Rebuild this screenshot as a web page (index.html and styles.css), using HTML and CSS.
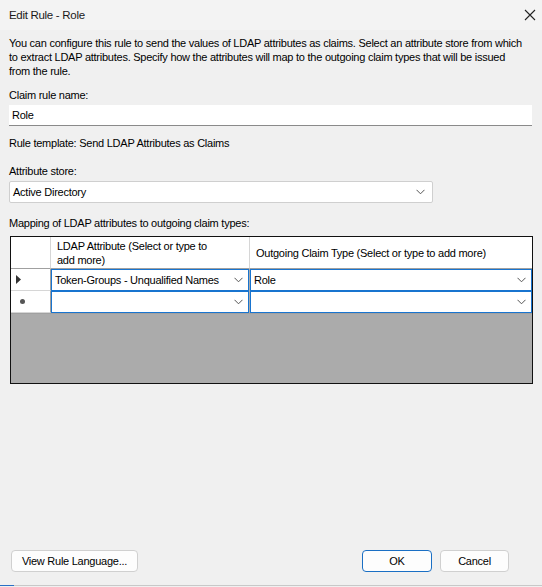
FILE: index.html
```html
<!DOCTYPE html>
<html>
<head>
<meta charset="utf-8">
<link rel="stylesheet" href="styles.css">
</head>
<body>
<div class="window">
  <div class="titlebar">
    <span class="title">Edit Rule - Role</span>
    <svg class="close" width="12" height="12" viewBox="0 0 12 12"><path d="M1 1 L11 11 M11 1 L1 11" stroke="#222" stroke-width="1.1" fill="none"/></svg>
  </div>
  <div class="content">
    <p class="desc">You can configure this rule to send the values of LDAP attributes as claims. Select an attribute store from which<br>to extract LDAP attributes. Specify how the attributes will map to the outgoing claim types that will be issued<br>from the rule.</p>
    <div class="label label-name">Claim rule name:</div>
    <div class="textbox">Role</div>
    <div class="label label-template">Rule template: Send LDAP Attributes as Claims</div>
    <div class="label label-store">Attribute store:</div>
    <div class="select">
      <span>Active Directory</span>
      <svg class="chev" width="9" height="6" viewBox="0 0 9 6"><path d="M0.5 0.8 L4.5 4.8 L8.5 0.8" stroke="#555" stroke-width="1" fill="none"/></svg>
    </div>
    <div class="label label-map">Mapping of LDAP attributes to outgoing claim types:</div>
    <div class="grid">
      <div class="hcell corner"></div>
      <div class="hcell">LDAP Attribute (Select or type to<br>add more)</div>
      <div class="hcell hcell-last">Outgoing Claim Type (Select or type to add more)</div>

      <div class="rowhead"><svg width="6" height="9" viewBox="0 0 6 9"><path d="M0 0 L5 4.5 L0 9 Z" fill="#333"/></svg></div>
      <div class="combo"><span>Token-Groups - Unqualified Names</span><svg class="chev" width="9" height="6" viewBox="0 0 9 6"><path d="M0.5 0.8 L4.5 4.8 L8.5 0.8" stroke="#555" stroke-width="1" fill="none"/></svg></div>
      <div class="combo"><span>Role</span><svg class="chev" width="9" height="6" viewBox="0 0 9 6"><path d="M0.5 0.8 L4.5 4.8 L8.5 0.8" stroke="#555" stroke-width="1" fill="none"/></svg></div>

      <div class="rowhead rowhead-new"><span class="newmark"></span></div>
      <div class="combo"><span></span><svg class="chev" width="9" height="6" viewBox="0 0 9 6"><path d="M0.5 0.8 L4.5 4.8 L8.5 0.8" stroke="#555" stroke-width="1" fill="none"/></svg></div>
      <div class="combo"><span></span><svg class="chev" width="9" height="6" viewBox="0 0 9 6"><path d="M0.5 0.8 L4.5 4.8 L8.5 0.8" stroke="#555" stroke-width="1" fill="none"/></svg></div>

      <div class="empty"></div>
    </div>
  </div>
  <div class="buttons">
    <button class="btn btn-view">View Rule Language...</button>
    <div class="spacer"></div>
    <button class="btn btn-ok">OK</button>
    <button class="btn btn-cancel">Cancel</button>
  </div>
  <div class="taskline"><span class="taskblue"></span></div>
</div>
</body>
</html>
```
FILE: styles.css
```css
html, body {
  margin: 0;
  padding: 0;
  background: #f0f0f0;
}
*, *::before, *::after { box-sizing: border-box; }
.window {
  width: 542px;
  height: 587px;
  display: flex;
  flex-direction: column;
  font-family: "Liberation Sans", Arial, sans-serif;
  font-size: 11px;
  letter-spacing: -0.25px;
  color: #000;
  background: #f0f0f0;
}
.titlebar {
  height: 30px;
  flex: none;
  display: flex;
  align-items: center;
  justify-content: space-between;
  padding: 0 6px 0 9px;
  background: #f3f3f3;
  font-size: 11.5px;
  letter-spacing: -0.3px;
}
.title { color: #1a1a1a; }
.content {
  flex: 1;
  padding: 0 9px 0 9px;
}
.desc {
  margin: 6px 0 0 0;
  line-height: 14px;
  width: 524px;
  white-space: nowrap;
}
.label {
  line-height: 14px;
}
.label-name { margin-top: 10px; margin-bottom: 3px; }
.textbox {
  height: 21px;
  line-height: 20px;
  background: #fff;
  border-bottom: 1px solid #8a8a8a;
  padding-left: 3px;
  width: 523px;
}
.label-template { margin-top: 10px; }
.label-store { margin-top: 14px; margin-bottom: 3px; }
.select {
  width: 424px;
  height: 22px;
  border: 1px solid #cfcfcf;
  border-radius: 2px;
  background: #fff;
  display: flex;
  align-items: center;
  justify-content: space-between;
  padding: 0 7px 0 3px;
}
.label-map { margin-top: 13px; margin-bottom: 6px; }
.grid {
  margin-left: 1px;
  width: 523px;
  height: 148px;
  border: 1px solid #111;
  display: grid;
  grid-template-columns: 40px 199px 1fr;
  grid-template-rows: 32px 22px 22px 1fr;
  background: #ababab;
}
.hcell {
  background: #fff;
  border-right: 1px solid #d6d6d6;
  border-bottom: 1px solid #a0a0a0;
  padding: 0 0 0 6px;
  line-height: 14px;
  display: flex;
  align-items: center;
}
.corner { padding: 0; }
.hcell-last { border-right: none; }
.rowhead {
  background: #fff;
  border-right: 1px solid #a0a0a0;
  border-bottom: 1px solid #d6d6d6;
  display: flex;
  align-items: center;
  padding-left: 5px;
}
.rowhead-new { padding-left: 9px; }
.newmark {
  width: 5px;
  height: 5px;
  border-radius: 50%;
  background: #555;
}
.combo {
  background: #fff;
  border: 1px solid #1874cf;
  display: flex;
  align-items: center;
  justify-content: space-between;
  padding: 0 5px 0 3px;
  margin-right: 1px;
}
.combo + .combo { margin-right: 0; }
.empty {
  grid-column: 1 / 4;
  background: #ababab;
  border-top: 1px solid #a0a0a0;
}
.buttons {
  flex: none;
  display: flex;
  align-items: center;
  padding: 0 33px 0 11px;
  height: 22px;
  margin-bottom: 13px;
}
.spacer { flex: 1; }
.btn {
  font-family: "Liberation Sans", Arial, sans-serif;
  font-size: 11px;
  letter-spacing: -0.25px;
  height: 22px;
  background: #fdfdfd;
  border: 1px solid #d0d0d0;
  border-radius: 4px;
  color: #000;
  padding: 0;
}
.btn-view { width: 127px; }
.btn-ok { width: 70px; border-color: #1a6fc4; }
.btn-cancel { width: 69px; margin-left: 8px; }
.taskline {
  height: 1px;
  background: #c8c8c8;
  flex: none;
  margin-bottom: 1px;
  display: flex;
}
.taskblue {
  width: 14px;
  background: #2b6fc4;
}
```
